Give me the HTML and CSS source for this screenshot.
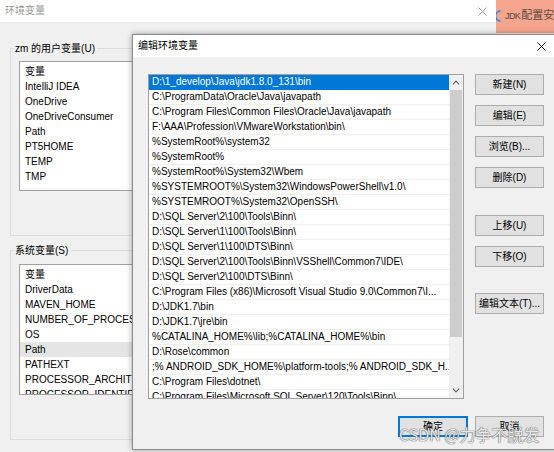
FILE: index.html
```html
<!DOCTYPE html>
<html lang="zh">
<head>
<meta charset="utf-8">
<title>编辑环境变量</title>
<link rel="stylesheet" href="styles.css">
</head>
<body>
<div class="desktop">
  <div class="win back">
    <div class="titlebar back-title">
      <span class="title">环境变量</span>
      <svg class="close" width="9" height="9" viewBox="0 0 9 9"><path d="M0.5 0.5 L8.5 8.5 M8.5 0.5 L0.5 8.5" stroke="#a0a0a0" stroke-width="1" fill="none"/></svg>
    </div>
    <div class="back-body">
      <div class="group g1">
        <span class="legend">zm 的用户变量(U)</span>
        <div class="listbox lb1">
          <div class="lrow">变量</div>
          <div class="lrow">IntelliJ IDEA</div>
          <div class="lrow">OneDrive</div>
          <div class="lrow">OneDriveConsumer</div>
          <div class="lrow">Path</div>
          <div class="lrow">PT5HOME</div>
          <div class="lrow">TEMP</div>
          <div class="lrow">TMP</div>
        </div>
      </div>
      <div class="group g2">
        <span class="legend">系统变量(S)</span>
        <div class="listbox lb2">
          <div class="lrow">变量</div>
          <div class="lrow">DriverData</div>
          <div class="lrow">MAVEN_HOME</div>
          <div class="lrow">NUMBER_OF_PROCESSORS</div>
          <div class="lrow">OS</div>
          <div class="lrow hl">Path</div>
          <div class="lrow">PATHEXT</div>
          <div class="lrow">PROCESSOR_ARCHITECTURE</div>
          <div class="lrow">PROCESSOR_IDENTIFIER</div>
        </div>
      </div>
    </div>
  </div>

  <div class="tab">
    <svg class="tab-icon" width="5" height="12" viewBox="0 0 5 12"><path d="M4.5 1 A5 5 0 0 0 4.5 11" stroke="#1f8ee0" stroke-width="1.6" fill="none"/></svg>
    <span class="tab-text"><span class="tab-latin">JDK</span>配置安装</span>
  </div>

  <div class="win front">
    <div class="titlebar front-title">
      <span class="title">编辑环境变量</span>
      <svg class="close" width="9" height="9" viewBox="0 0 9 9"><path d="M0.5 0.5 L8.5 8.5 M8.5 0.5 L0.5 8.5" stroke="#111" stroke-width="1" fill="none"/></svg>
    </div>
    <div class="front-body">
      <div class="main-row">
        <div class="pathlist">
          <div class="rows">
            <div class="prow sel">D:\1_develop\Java\jdk1.8.0_131\bin</div>
            <div class="prow">C:\ProgramData\Oracle\Java\javapath</div>
            <div class="prow">C:\Program Files\Common Files\Oracle\Java\javapath</div>
            <div class="prow">F:\AAA\Profession\VMwareWorkstation\bin\</div>
            <div class="prow">%SystemRoot%\system32</div>
            <div class="prow">%SystemRoot%</div>
            <div class="prow">%SystemRoot%\System32\Wbem</div>
            <div class="prow">%SYSTEMROOT%\System32\WindowsPowerShell\v1.0\</div>
            <div class="prow">%SYSTEMROOT%\System32\OpenSSH\</div>
            <div class="prow">D:\SQL Server\2\100\Tools\Binn\</div>
            <div class="prow">D:\SQL Server\1\100\Tools\Binn\</div>
            <div class="prow">D:\SQL Server\1\100\DTS\Binn\</div>
            <div class="prow">D:\SQL Server\2\100\Tools\Binn\VSShell\Common7\IDE\</div>
            <div class="prow">D:\SQL Server\2\100\DTS\Binn\</div>
            <div class="prow">C:\Program Files (x86)\Microsoft Visual Studio 9.0\Common7\I...</div>
            <div class="prow">D:\JDK1.7\bin</div>
            <div class="prow">D:\JDK1.7\jre\bin</div>
            <div class="prow">%CATALINA_HOME%\lib;%CATALINA_HOME%\bin</div>
            <div class="prow">D:\Rose\common</div>
            <div class="prow">;% ANDROID_SDK_HOME%\platform-tools;% ANDROID_SDK_H...</div>
            <div class="prow">C:\Program Files\dotnet\</div>
            <div class="prow">C:\Program Files\Microsoft SQL Server\120\Tools\Binn\</div>
          </div>
          <div class="scrollbar">
            <div class="sb-btn">
              <svg width="8" height="5" viewBox="0 0 8 5"><path d="M0.8 4.3 L4 1.1 L7.2 4.3" stroke="#606060" stroke-width="1.1" fill="none"/></svg>
            </div>
            <div class="sb-track"><div class="sb-thumb"></div></div>
            <div class="sb-btn">
              <svg width="8" height="5" viewBox="0 0 8 5"><path d="M0.8 0.7 L4 3.9 L7.2 0.7" stroke="#606060" stroke-width="1.1" fill="none"/></svg>
            </div>
          </div>
        </div>
        <div class="btncol">
          <div class="btn">新建(N)</div>
          <div class="btn">编辑(E)</div>
          <div class="btn">浏览(B)...</div>
          <div class="btn">删除(D)</div>
          <div class="btn gap-big">上移(U)</div>
          <div class="btn">下移(O)</div>
          <div class="btn gap-big2">编辑文本(T)...</div>
        </div>
      </div>
      <div class="footer">
        <div class="btn ok">确定</div>
        <div class="btn cancel">取消</div>
      </div>
    </div>
  </div>

  <div class="watermark">CSDN @力争不脱发</div>
</div>
</body>
</html>
```
FILE: styles.css
```css
html, body {
  margin: 0;
  padding: 0;
}
body {
  font-family: "Liberation Sans", "Noto Sans CJK SC", sans-serif;
  font-size: 10px;
  color: #000;
  background: #f0f0f0;
}
.desktop {
  position: relative;
  width: 554px;
  height: 452px;
  overflow: hidden;
  background: #f0f0f0;
}
.win {
  position: absolute;
  box-sizing: border-box;
}
.back {
  left: 0;
  top: 0;
  width: 506px;
  height: 452px;
  background: #f0f0f0;
}
.titlebar {
  display: flex;
  align-items: center;
  background: #fff;
  box-sizing: border-box;
  line-height: 14px;
}
.back-title {
  height: 22px;
  padding-left: 5px;
  padding-right: 19px;
}
.back-title .title {
  color: #9a9a9a;
}
.titlebar .close {
  margin-left: auto;
}
.back-body {
  padding-left: 10px;
}
.group {
  box-sizing: border-box;
  border: 1px solid #dcdcdc;
  width: 480px;
}
.g1 {
  margin-top: 26px;
  height: 188px;
}
.g2 {
  margin-top: 14px;
  height: 190px;
}
.legend {
  display: block;
  width: fit-content;
  margin-top: -7px;
  margin-left: 3px;
  padding: 0 2px 0 1px;
  line-height: 14px;
  background: #f0f0f0;
}
.listbox {
  box-sizing: border-box;
  margin-left: 8px;
  border: 1px solid #a0a0a0;
  background: #fff;
  overflow: hidden;
  padding-top: 2px;
}
.lb1 {
  margin-top: 5px;
  height: 130px;
}
.lb2 {
  margin-top: 6px;
  height: 131px;
}
.lrow {
  height: 15px;
  line-height: 15px;
  padding-left: 5px;
  white-space: nowrap;
}
.lrow.hl {
  background: #e5e5e5;
}

.tab {
  position: absolute;
  left: 496px;
  top: 0;
  width: 58px;
  height: 33px;
  background: #f5a48d;
  display: flex;
  align-items: flex-start;
  padding-top: 9px;
  box-sizing: border-box;
  overflow: hidden;
}
.tab-icon {
  margin-top: 1px;
  flex: none;
}
.tab-text {
  margin-left: 4px;
  font-size: 11px;
  line-height: 13px;
  color: #5b4a45;
  white-space: nowrap;
}
.tab-latin {
  font-size: 9px;
  letter-spacing: -0.6px;
  margin-right: 1px;
}

.front {
  left: 132px;
  top: 34px;
  width: 440px;
  height: 416px;
  border: 1px solid #8a8a8a;
  background: #f0f0f0;
  box-shadow: 0 0 6px rgba(0, 0, 0, 0.35);
}
.front-title {
  height: 22px;
  padding-left: 5px;
  padding-right: 25px;
}
.front-body {
  padding: 17px 0 0 15px;
}
.main-row {
  display: flex;
  align-items: flex-start;
}
.pathlist {
  box-sizing: border-box;
  width: 316px;
  height: 325px;
  border: 1px solid #a0a0a0;
  background: #fff;
  display: flex;
  overflow: hidden;
}
.rows {
  flex: 1;
  min-width: 0;
  overflow: hidden;
}
.prow {
  box-sizing: border-box;
  height: 15px;
  line-height: 14px;
  padding: 0 4px 0 3px;
  border-bottom: 1px solid #f0f0f0;
  white-space: nowrap;
  overflow: hidden;
}
.prow.sel {
  background: #0078d7;
  border-bottom-color: #0078d7;
  color: #fff;
}
.scrollbar {
  width: 14px;
  flex: none;
  display: flex;
  flex-direction: column;
  background: #f0f0f0;
}
.sb-btn {
  height: 15px;
  display: flex;
  align-items: center;
  justify-content: center;
  flex: none;
}
.sb-track {
  flex: 1;
  padding: 0 1px;
}
.sb-thumb {
  height: 247px;
  background: #cdcdcd;
}
.btncol {
  margin-left: 11px;
  display: flex;
  flex-direction: column;
  gap: 10px;
}
.btn {
  box-sizing: border-box;
  width: 69px;
  height: 21px;
  line-height: 19px;
  text-align: center;
  background: #e1e1e1;
  border: 1px solid #adadad;
  white-space: nowrap;
}
.btncol .gap-big {
  margin-top: 17px;
}
.btncol .gap-big2 {
  margin-top: 16px;
}
.footer {
  width: 396px;
  display: flex;
  justify-content: flex-end;
  gap: 7px;
  margin-top: 17px;
}
.btn.ok {
  width: 70px;
  border: 1px solid #0078d7;
  box-shadow: inset 0 0 0 1px #0078d7;
}
.watermark {
  position: absolute;
  left: 399px;
  top: 424px;
  font-family: "Noto Sans CJK SC", sans-serif;
  font-size: 16px;
  line-height: 20px;
  color: rgba(255, 255, 255, 0.9);
  text-shadow: 0 0 1px rgba(70, 70, 70, 0.9), 0 0 1px rgba(70, 70, 70, 0.9);
  white-space: nowrap;
}
```
